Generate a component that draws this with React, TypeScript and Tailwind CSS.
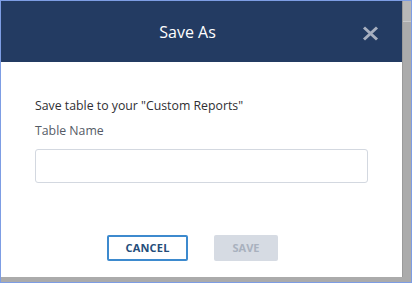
import React, { useState } from 'react';

export default function App() {
  const [tableName, setTableName] = useState('');

  return (
    <div
      className="w-[412px] h-[283px] border border-[#7d9de4] bg-[#ababab] flex flex-col overflow-hidden"
      style={{ fontFamily: '"Open Sans", "Noto Sans", sans-serif' }}
    >
      <div className="flex flex-1 min-h-0">
        {/* dialog */}
        <div className="w-[402px] h-[276px] bg-white flex flex-col border-r border-[#9a9a9a]">
          {/* header */}
          <div className="relative h-[61px] bg-[#233b62] flex items-center justify-center pr-[28px]">
            <span className="text-white text-[16px] leading-none">Save As</span>
            <button type="button" className="absolute right-[23px] top-[25px] w-[17px] h-[15px] flex items-center justify-center">
              <svg width="17" height="15" viewBox="0 0 17 15">
                <path d="M2 1.5 L15 13.5 M15 1.5 L2 13.5" stroke="#a7afbf" strokeWidth="3" strokeLinecap="butt" />
              </svg>
            </button>
          </div>

          {/* body */}
          <div className="flex flex-col px-[34px] pt-[36px]">
            <p className="text-[12.3px] leading-[16px] text-[#2f2f33]">Save table to your "Custom Reports"</p>
            <label className="mt-[9px] text-[12.3px] leading-[16px] text-[#555b66]">Table Name</label>
            <input
              type="text"
              value={tableName}
              onChange={e => setTableName(e.target.value)}
              className="mt-[10px] w-[333px] h-[34px] rounded-[3px] border border-[#d3d8e0] outline-none px-2 text-[12px]"
            />
          </div>

          {/* footer */}
          <div className="flex gap-[26px] pl-[106px] mt-[52px]">
            <button
              type="button"
              className="w-[81px] h-[26px] rounded-[2px] border-2 border-[#3d8ace] text-[#244d7a] text-[11px] font-bold tracking-[0.2px]"
            >
              CANCEL
            </button>
            <button
              type="button"
              disabled
              className="w-[64px] h-[26px] rounded-[2px] bg-[#d6dbe3] text-[#a9b1be] text-[11px] font-bold"
            >
              SAVE
            </button>
          </div>
        </div>
        {/* scrollbar strip */}
        <div className="flex-1 flex flex-col">
          <div className="h-[21px] bg-[#b8b8b8] border-b border-[#c9c9c9]" />
          <div className="flex-1" />
        </div>
      </div>
    </div>
  );
}
